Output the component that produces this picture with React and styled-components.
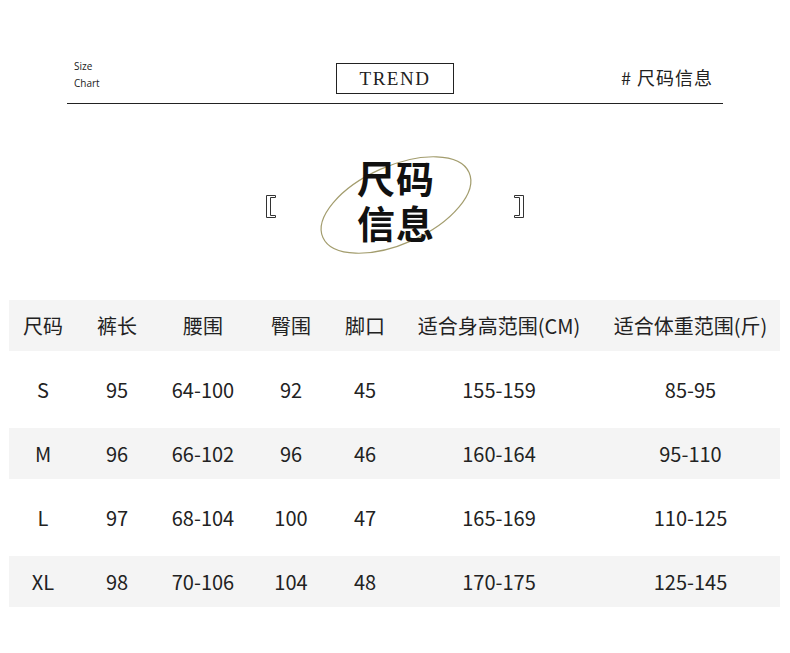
import React from "react";
import styled, { createGlobalStyle } from "styled-components";

const GlobalStyle = createGlobalStyle`
  html, body {
    margin: 0;
    padding: 0;
    background: #ffffff;
  }
  body {
    font-family: "Noto Sans CJK SC", "Noto Sans", sans-serif;
    color: #222;
  }
`;

const Page = styled.div`
  width: 790px;
  height: 653px;
  background: #fff;
  overflow: hidden;
  padding-top: 56px;
  box-sizing: border-box;
`;

const Header = styled.div`
  margin: 0 67px 0 67px;
  height: 47px;
  border-bottom: 1px solid #222;
  display: grid;
  grid-template-columns: 1fr auto 1fr;
  align-items: start;
`;

const SizeChart = styled.div`
  padding-left: 7px;
  font-family: "Open Sans", "Noto Sans", sans-serif;
  font-size: 10px;
  line-height: 17px;
  color: #222;
  padding-top: 2px;
`;

const TrendBox = styled.div`
  margin-top: 7px;
  width: 116px;
  height: 29px;
  border: 1px solid #222;
  display: flex;
  align-items: center;
  justify-content: center;
  font-family: "Liberation Serif", "DejaVu Serif", serif;
  font-size: 19px;
  letter-spacing: 1.5px;
  color: #222;
`;

const Tag = styled.div`
  justify-self: end;
  margin-top: 8px;
  margin-right: 10px;
  font-size: 18px;
  line-height: 26px;
  color: #222;
  letter-spacing: 1px;
`;

const TitleArea = styled.div`
  height: 196px;
  display: flex;
  align-items: center;
  justify-content: center;
`;

const Bracket = styled.svg`
  display: block;
  margin-top: 8px;
  margin-left: ${(p) => (p.$right ? "15px" : "0")};
  margin-right: ${(p) => (p.$right ? "0" : "9px")};
`;

const TitleBlock = styled.div`
  position: relative;
  width: 212px;
  height: 110px;
  display: flex;
  align-items: center;
  justify-content: center;
`;

const Ring = styled.svg`
  position: absolute;
  left: 0;
  top: 0;
  overflow: visible;
`;

const Title = styled.div`
  position: relative;
  font-size: 38px;
  font-weight: 700;
  letter-spacing: 1px;
  color: #111;
  text-align: center;
  margin-top: -6px;
  margin-left: 8px;
`;

const TitleLine = styled.div`
  height: 45px;
  line-height: 45px;
`;

const Table = styled.div`
  margin: 0 10px 0 9px;
`;

const Row = styled.div`
  display: grid;
  grid-template-columns: 68px 80px 92px 84px 64px 204px 179px;
  height: ${(p) => (p.$shade ? "51px" : "77px")};
  background: ${(p) => (p.$shade ? "#f4f4f4" : "#fff")};
  align-items: center;
`;

const Cell = styled.div`
  text-align: center;
  font-size: 20px;
  font-weight: 400;
  color: #222;
  white-space: nowrap;
`;

const headers = ["尺码", "裤长", "腰围", "臀围", "脚口", "适合身高范围(CM)", "适合体重范围(斤)"];
const rows = [
  ["S", "95", "64-100", "92", "45", "155-159", "85-95"],
  ["M", "96", "66-102", "96", "46", "160-164", "95-110"],
  ["L", "97", "68-104", "100", "47", "165-169", "110-125"],
  ["XL", "98", "70-106", "104", "48", "170-175", "125-145"],
];

function LeftBracket() {
  return (
    <Bracket width="12" height="25" viewBox="0 0 12 25">
      <path
        d="M1.5 1.5 H10.5 V3.5 H5.5 V21.5 H10.5 V23.5 H1.5 Z"
        fill="#fff"
        stroke="#333"
        strokeWidth="1"
        strokeLinejoin="round"
      />
    </Bracket>
  );
}

function RightBracket() {
  return (
    <Bracket $right width="12" height="25" viewBox="0 0 12 25">
      <path
        d="M10.5 1.5 H1.5 V3.5 H6.5 V21.5 H1.5 V23.5 H10.5 Z"
        fill="#fff"
        stroke="#333"
        strokeWidth="1"
        strokeLinejoin="round"
      />
    </Bracket>
  );
}

export default function App() {
  return (
    <Page>
      <GlobalStyle />
      <Header>
        <SizeChart>
          <div>Size</div>
          <div>Chart</div>
        </SizeChart>
        <TrendBox>TREND</TrendBox>
        <Tag># 尺码信息</Tag>
      </Header>
      <TitleArea>
        <LeftBracket />
        <TitleBlock>
          <Ring width="212" height="110">
            <ellipse
              cx="110"
              cy="58"
              rx="80"
              ry="39"
              transform="rotate(-24 110 58)"
              fill="none"
              stroke="#a39d6e"
              strokeWidth="1.2"
            />
          </Ring>
          <Title>
            <TitleLine>尺码</TitleLine>
            <TitleLine>信息</TitleLine>
          </Title>
        </TitleBlock>
        <RightBracket />
      </TitleArea>
      <Table>
        <Row $shade>
          {headers.map((h) => (
            <Cell key={h}>{h}</Cell>
          ))}
        </Row>
        {rows.map((r, i) => (
          <Row key={r[0]} $shade={i % 2 === 1}>
            {r.map((c, j) => (
              <Cell key={j}>{c}</Cell>
            ))}
          </Row>
        ))}
      </Table>
    </Page>
  );
}
